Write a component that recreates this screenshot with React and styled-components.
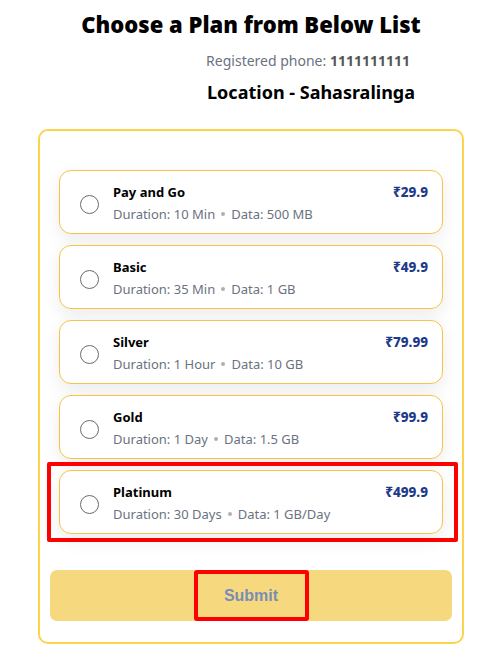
import React from "react";
import styled, { createGlobalStyle } from "styled-components";

const Global = createGlobalStyle`
  html, body { margin: 0; padding: 0; background: #fff; }
  body { font-family: "Noto Sans", "Open Sans", sans-serif; }
`;

const Page = styled.div`
  width: 498px;
  display: flex;
  flex-direction: column;
  align-items: center;
  padding-top: 9px;
`;

const Title = styled.h1`
  margin: 0;
  font-family: "Noto Sans", sans-serif;
  font-weight: 900;
  font-size: 22px;
  line-height: 30px;
  color: #000;
  text-align: center;
  margin-left: 4px;
`;

const Phone = styled.div`
  align-self: flex-end;
  margin-right: 88px;
  margin-top: 12px;
  font-size: 14px;
  line-height: 20px;
  color: #6b7280;
  & b { font-weight: 700; color: #555; }
`;

const Location = styled.div`
  align-self: flex-end;
  margin-right: 83px;
  margin-top: 9px;
  font-size: 18px;
  line-height: 24px;
  font-weight: 700;
  color: #000;
`;

const Card = styled.div`
  box-sizing: border-box;
  width: 426px;
  margin-top: 25px;
  margin-left: 4px;
  border: 2px solid #fcd34d;
  border-radius: 10px;
  padding: 10px 10px 21px;
`;

const List = styled.div`
  display: flex;
  flex-direction: column;
  gap: 11px;
  padding: 29px 9px 0;
`;

const Item = styled.label`
  box-sizing: border-box;
  height: 64px;
  display: flex;
  align-items: center;
  gap: 14px;
  padding: 4px 14px 0 20px;
  border: 1px solid #f5c542;
  border-radius: 12px;
  background: #fff;
  box-shadow: 0 6px 18px rgba(0, 0, 0, 0.08);
  cursor: pointer;
`;

const Highlight = styled.div`
  margin: -8px -15px -8px -12px;
  padding: 4px 11px 4px 8px;
  border: 4px solid #ff0000;
  border-radius: 2px;
`;

const Radio = styled.span`
  box-sizing: border-box;
  width: 19px;
  height: 19px;
  border-radius: 50%;
  border: 1.5px solid #6b6b6b;
  flex: none;
`;

const Info = styled.div`
  flex: 1;
  display: flex;
  flex-direction: column;
  gap: 4px;
  margin-top: -2px;
`;

const Top = styled.div`
  display: flex;
  justify-content: space-between;
  align-items: baseline;
`;

const Name = styled.span`
  font-size: 13px;
  font-weight: 700;
  color: #000;
  line-height: 18px;
`;

const Price = styled.span`
  font-size: 13.5px;
  font-weight: 800;
  color: #1e3a8a;
  line-height: 18px;
`;

const Details = styled.div`
  font-size: 13px;
  color: #6b7280;
  line-height: 18px;
  display: flex;
  align-items: center;
  gap: 6px;
`;

const Dot = styled.span`
  width: 4px;
  height: 4px;
  border-radius: 50%;
  background: #b0b0b0;
`;

const Submit = styled.button`
  margin-top: 36px;
  width: 100%;
  height: 51px;
  border: none;
  border-radius: 7px;
  background: #f6d97f;
  display: flex;
  align-items: center;
  justify-content: center;
  padding: 0;
  cursor: pointer;
`;

const SubmitLabel = styled.span`
  box-sizing: border-box;
  height: 51px;
  width: 115px;
  display: flex;
  align-items: center;
  justify-content: center;
  border: 4px solid #ff0000;
  border-radius: 3px;
  font-family: "Liberation Sans", Arial, sans-serif;
  font-weight: 700;
  font-size: 16px;
  color: #7a8db5;
`;

const plans = [
  { name: "Pay and Go", price: "₹29.9", duration: "10 Min", data: "500 MB" },
  { name: "Basic", price: "₹49.9", duration: "35 Min", data: "1 GB" },
  { name: "Silver", price: "₹79.99", duration: "1 Hour", data: "10 GB" },
  { name: "Gold", price: "₹99.9", duration: "1 Day", data: "1.5 GB" },
  { name: "Platinum", price: "₹499.9", duration: "30 Days", data: "1 GB/Day", highlight: true },
];

function PlanItem({ p }) {
  return (
    <Item>
      <Radio />
      <Info>
        <Top>
          <Name>{p.name}</Name>
          <Price>{p.price}</Price>
        </Top>
        <Details>
          <span>Duration: {p.duration}</span>
          <Dot />
          <span>Data: {p.data}</span>
        </Details>
      </Info>
    </Item>
  );
}

export default function App() {
  return (
    <>
      <Global />
      <Page>
        <Title>Choose a Plan from Below List</Title>
        <Phone>
          Registered phone: <b>1111111111</b>
        </Phone>
        <Location>Location - Sahasralinga</Location>
        <Card>
          <List>
            {plans.map((p) =>
              p.highlight ? (
                <Highlight key={p.name}>
                  <PlanItem p={p} />
                </Highlight>
              ) : (
                <PlanItem key={p.name} p={p} />
              )
            )}
          </List>
          <Submit>
            <SubmitLabel>Submit</SubmitLabel>
          </Submit>
        </Card>
      </Page>
    </>
  );
}
